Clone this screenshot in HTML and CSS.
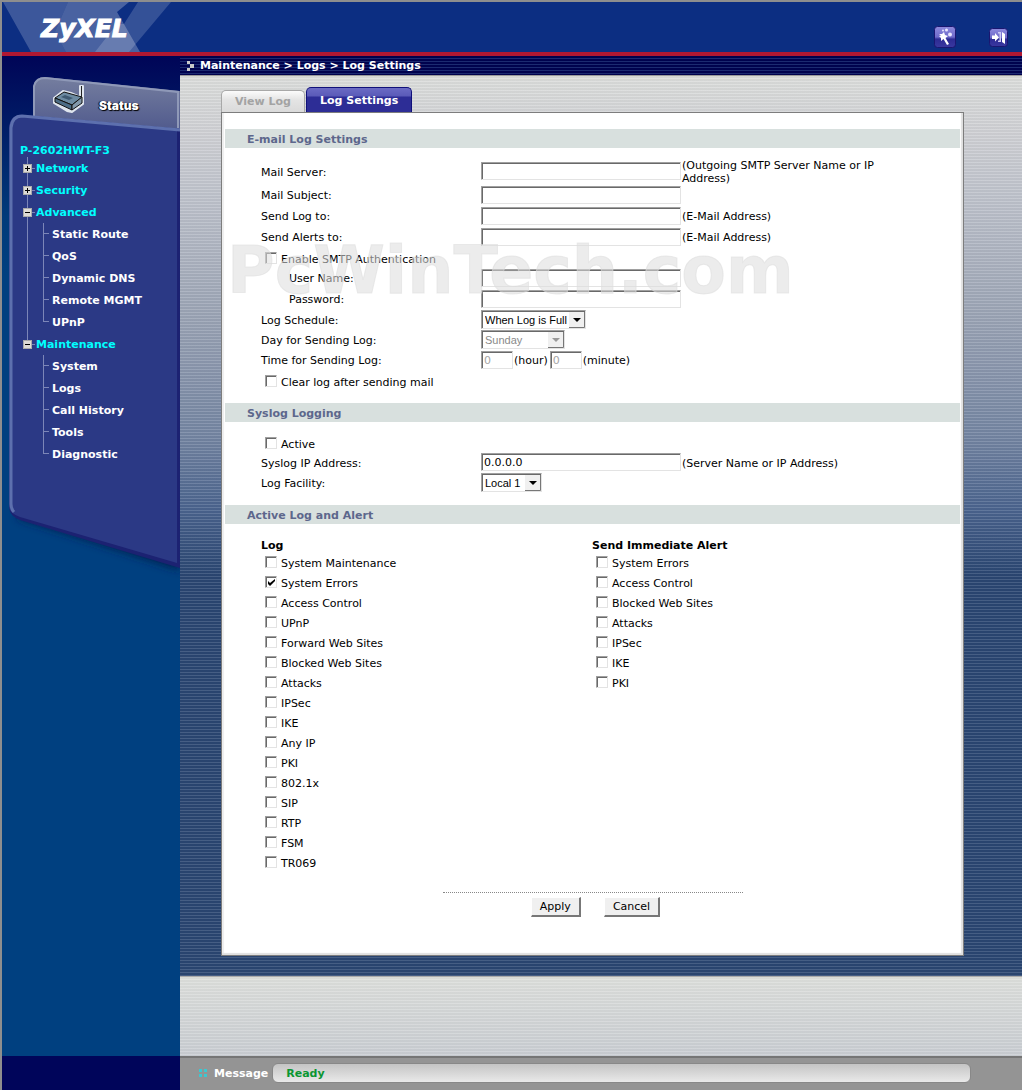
FILE: index.html
```html
<!DOCTYPE html>
<html lang="en">
<head>
<meta charset="utf-8">
<title>Log Settings</title>
<link rel="stylesheet" href="styles.css">
</head>
<body>
<div class="page">
  <header class="banner">
    <svg class="banner-art" width="176" height="50" viewBox="0 0 176 50" aria-hidden="true">
      <g fill="#fff">
        <path d="M1 0H66L53 30L64 50H29Z" fill-opacity=".2"/>
        <path d="M66 0H127L115 10L138 50H64L53 30Z" fill-opacity=".25"/>
        <path d="M136 0H169L127 50H93L115 22L122 22Z" fill-opacity=".17"/>
      </g>
    </svg>
    <h1 class="logo">ZyXEL</h1>
    <div class="banner-tools">
      <button class="tool" type="button" aria-label="Wizard">
        <svg width="22" height="22" viewBox="0 0 22 22">
          <defs><linearGradient id="tool" x1="0" y1="0" x2="0" y2="1"><stop offset="0" stop-color="#8d89dd"/><stop offset=".5" stop-color="#6f6bcb"/><stop offset=".6" stop-color="#2d2b94"/><stop offset="1" stop-color="#3a38a0"/></linearGradient></defs>
          <rect x=".5" y=".5" width="21" height="21" rx="3" fill="url(#tool)" stroke="#1a1670"/>
          <path d="M5 8l3 0 2-2 1 3 3 1-2.500 2 3.500 6-2 1-3.500-6-2.500 2v-3l-2-2 2-.5z" fill="#fff"/>
          <g fill="#e8e6ff"><circle cx="9" cy="4.500" r="1"/><circle cx="12.500" cy="4" r="1.500"/><circle cx="16" cy="8.500" r="2"/></g>
        </svg>
      </button>
      <button class="tool" type="button" aria-label="Logout">
        <svg width="19" height="19" viewBox="0 0 19 19">
          <rect x=".5" y=".5" width="18" height="18" rx="3" fill="url(#tool)" stroke="#1a1670"/>
          <path d="M3 7.500h3V5l4 4.500-4 4V11H3z" fill="#fff"/>
          <path d="M9 4h3v10H9v-1.500h1.500v-7H9z" fill="#c9c7f5"/>
          <path d="M13 4l3 2v10l-3-2z" fill="#fff"/>
        </svg>
      </button>
    </div>
  </header>

  <div class="body">
    <aside class="side">
      <svg class="side-art" width="178" height="530" viewBox="0 0 178 530" aria-hidden="true">
        <defs>
          <linearGradient id="tab" x1="0" y1="0" x2="0" y2="1"><stop offset="0" stop-color="#757e9f"/><stop offset="1" stop-color="#4c568b"/></linearGradient>
          <filter id="shade" x="-10%" y="-10%" width="120%" height="130%"><feGaussianBlur stdDeviation="4"/></filter>
        </defs>
        <path d="M32 70V28Q34 21 43 21L178 35V80Z" fill="url(#tab)"/>
        <path d="M32 62V30Q34 22 43 22L176 36V72" fill="none" stroke="#8f99b8" stroke-width="2"/>
        <path d="M16 462L178 514V500L16 455Z" fill="#00204f" filter="url(#shade)"/>
        <path d="M7 450V72Q8 59 20 59L178 73V512L18 464Q7 460 7 450Z" fill="#1c2272"/>
        <path d="M7 450V72Q8 59 20 59L178 73V75L175 75V507L18 461Q7 457 7 450Z" fill="#2b3985"/>
        <path d="M12 456Q9 453 9 448V72Q10 60 20 60L178 74" fill="none" stroke="#5d70ae" stroke-width="3"/>
        <g transform="translate(51 29)">
          <path d="M1 13L10 6 18 8 27 12V1H30V19L19 27 14 26 1 18Z" fill="#dfe5ee" stroke="#dfe5ee" stroke-width="2" stroke-linejoin="round"/>
          <path d="M2 13L11 7 29 12 19 20Z" fill="#6d8ba2" stroke="#111"/>
          <path d="M2 13V17L19 25V20Z" fill="#4d6d86" stroke="#111"/>
          <path d="M19 20V25L29 18V12Z" fill="#8298aa" stroke="#111"/>
          <path d="M8 12l4-2 8 3-4 2z" fill="#3f5a72"/>
          <path d="M28.500 1V13" stroke="#222"/>
        </g>
      </svg>
      <a class="status" href="#status">Status</a>
      <nav class="menu" aria-label="Main menu">
        <a class="model" href="#model">P-2602HWT-F3</a>
        <ul class="tree">
          <li><div class="branch"><button class="toggle" type="button" aria-label="Expand Network"><svg width="9" height="9"><path d="M2 4.500h5M4.500 2v5" stroke="#000"/></svg></button><a href="#network">Network</a></div></li>
          <li><div class="branch"><button class="toggle" type="button" aria-label="Expand Security"><svg width="9" height="9"><path d="M2 4.500h5M4.500 2v5" stroke="#000"/></svg></button><a href="#security">Security</a></div></li>
          <li><div class="branch"><button class="toggle" type="button" aria-label="Collapse Advanced"><svg width="9" height="9"><path d="M2 4.500h5" stroke="#000"/></svg></button><a href="#advanced">Advanced</a></div>
            <ul class="leaves">
              <li><a href="#static">Static Route</a></li>
              <li><a href="#qos">QoS</a></li>
              <li><a href="#ddns">Dynamic DNS</a></li>
              <li><a href="#remote">Remote MGMT</a></li>
              <li><a href="#upnp">UPnP</a></li>
            </ul>
          </li>
          <li><div class="branch"><button class="toggle" type="button" aria-label="Collapse Maintenance"><svg width="9" height="9"><path d="M2 4.500h5" stroke="#000"/></svg></button><a href="#maintenance">Maintenance</a></div>
            <ul class="leaves">
              <li><a href="#system">System</a></li>
              <li><a href="#logs">Logs</a></li>
              <li><a href="#calls">Call History</a></li>
              <li><a href="#tools">Tools</a></li>
              <li><a href="#diagnostic">Diagnostic</a></li>
            </ul>
          </li>
        </ul>
      </nav>
    </aside>

    <main class="main">
      <div class="crumbs">
        <svg width="7" height="10" viewBox="0 0 7 10" fill="#c8c8c8" aria-hidden="true"><path d="M0 0h3v3H0zM3 3h4v4H3zM0 7h3v3H0z"/></svg>
        <span>Maintenance &gt; Logs &gt; Log Settings</span>
      </div>
      <div class="stage">
        <div class="tabs">
          <a class="tab" href="#view-log">View Log</a>
          <a class="tab tab-on" href="#log-settings">Log Settings</a>
        </div>
        <form class="panel">
          <h2 class="bar">E-mail Log Settings</h2>
          <div class="fields">
            <div class="row row-tall"><label for="server">Mail Server:</label><input class="text" id="server" type="text"><span class="hint">(Outgoing SMTP Server Name or IP Address)</span></div>
            <div class="row"><label for="subject">Mail Subject:</label><input class="text" id="subject" type="text"></div>
            <div class="row"><label for="logto">Send Log to:</label><input class="text" id="logto" type="text"><span class="hint">(E-Mail Address)</span></div>
            <div class="row"><label for="alertto">Send Alerts to:</label><input class="text" id="alertto" type="text"><span class="hint">(E-Mail Address)</span></div>
            <label class="check"><input type="checkbox">Enable SMTP Authentication</label>
            <div class="row"><label class="deep" for="user">User Name:</label><input class="text" id="user" type="text"></div>
            <div class="row"><label class="deep" for="pass">Password:</label><input class="text" id="pass" type="password"></div>
            <div class="row row-low"><label for="schedule">Log Schedule:</label><select class="pick pick-wide" id="schedule"><option>When Log is Full</option></select></div>
            <div class="row row-low"><label for="day">Day for Sending Log:</label><select class="pick pick-mid" id="day" disabled><option>Sunday</option></select></div>
            <div class="row"><label for="hour">Time for Sending Log:</label><input class="text text-short" id="hour" type="text" value="0" disabled><span class="hint">(hour)</span><input class="text text-short" type="text" value="0" aria-label="Minute" disabled><span class="hint">(minute)</span></div>
            <label class="check"><input type="checkbox">Clear log after sending mail</label>
          </div>
          <h2 class="bar">Syslog Logging</h2>
          <div class="fields">
            <label class="check"><input type="checkbox">Active</label>
            <div class="row row-low"><label for="syslog">Syslog IP Address:</label><input class="text" id="syslog" type="text" value="0.0.0.0"><span class="hint">(Server Name or IP Address)</span></div>
            <div class="row row-low"><label for="facility">Log Facility:</label><select class="pick pick-small" id="facility"><option>Local 1</option></select></div>
          </div>
          <h2 class="bar">Active Log and Alert</h2>
          <div class="lists">
            <fieldset class="list">
              <legend>Log</legend>
              <label class="check"><input type="checkbox">System Maintenance</label>
              <label class="check"><input type="checkbox" checked>System Errors</label>
              <label class="check"><input type="checkbox">Access Control</label>
              <label class="check"><input type="checkbox">UPnP</label>
              <label class="check"><input type="checkbox">Forward Web Sites</label>
              <label class="check"><input type="checkbox">Blocked Web Sites</label>
              <label class="check"><input type="checkbox">Attacks</label>
              <label class="check"><input type="checkbox">IPSec</label>
              <label class="check"><input type="checkbox">IKE</label>
              <label class="check"><input type="checkbox">Any IP</label>
              <label class="check"><input type="checkbox">PKI</label>
              <label class="check"><input type="checkbox">802.1x</label>
              <label class="check"><input type="checkbox">SIP</label>
              <label class="check"><input type="checkbox">RTP</label>
              <label class="check"><input type="checkbox">FSM</label>
              <label class="check"><input type="checkbox">TR069</label>
            </fieldset>
            <fieldset class="list">
              <legend>Send Immediate Alert</legend>
              <label class="check"><input type="checkbox">System Errors</label>
              <label class="check"><input type="checkbox">Access Control</label>
              <label class="check"><input type="checkbox">Blocked Web Sites</label>
              <label class="check"><input type="checkbox">Attacks</label>
              <label class="check"><input type="checkbox">IPSec</label>
              <label class="check"><input type="checkbox">IKE</label>
              <label class="check"><input type="checkbox">PKI</label>
            </fieldset>
          </div>
          <hr class="rule">
          <div class="actions">
            <button class="push" type="submit">Apply</button>
            <button class="push" type="reset">Cancel</button>
          </div>
          <div class="watermark" aria-hidden="true">PcWinTech.com</div>
        </form>
      </div>
      <div class="rest"></div>
    </main>
  </div>

  <footer class="foot">
    <div class="foot-side"></div>
    <div class="foot-main">
      <svg width="9" height="8" viewBox="0 0 9 8" fill="#3cc8d2" aria-hidden="true"><path d="M0 0h3v3H0zM5 0h3v3H5zM0 5h3v3H0zM5 5h3v3H5z"/></svg>
      <span class="foot-label">Message</span>
      <output class="foot-text">Ready</output>
    </div>
  </footer>
</div>
</body>
</html>
```
FILE: styles.css
```css
* { box-sizing: border-box; }

body {
  margin: 0;
  font: 11px/13px Verdana, "DejaVu Sans", sans-serif;
  color: #000;
}

a { color: inherit; text-decoration: none; }
ul { list-style: none; margin: 0; padding: 0; }
button { font: inherit; }

.page {
  display: flex;
  flex-direction: column;
  min-height: 100vh;
  border: solid #8e8e8e;
  border-width: 2px 0 0 2px;
}

/* Banner */
.banner {
  position: relative;
  display: flex;
  align-items: center;
  justify-content: space-between;
  height: 54px;
  padding: 0 14px 0 39px;
  background: #0c2e82;
  border-bottom: 4px solid #b01832;
}
.banner-art { position: absolute; left: 0; top: 0; }
.logo {
  position: relative;
  margin: 0;
  padding-top: 4px;
  color: #fff;
  font: italic bold 25px/30px Verdana, "DejaVu Sans", sans-serif;
  -webkit-text-stroke: 1px #fff;
}
.banner-tools {
  display: flex;
  align-items: center;
  gap: 33px;
  padding-top: 20px;
}
.tool { padding: 0; border: 0; background: none; }
.tool svg { display: block; }

/* Sidebar */
.body { flex: 1; display: flex; }
.side {
  position: relative;
  flex: none;
  width: 178px;
  background: linear-gradient(#000557, #003a7a 160px, #004080 220px);
}
.side-art { position: absolute; left: 0; top: 0; }
.status {
  position: relative;
  display: block;
  margin: 42px 0 0 97px;
  color: #fff;
  font: 900 12px/15px Inter, sans-serif;
  text-shadow: 1px 1px 1px #000, -1px 0 1px #000;
}
.menu {
  position: relative;
  padding: 31px 0 0 18px;
  font-weight: bold;
  color: #fff;
}
.model { display: block; color: #0ff; }
.tree > li { background: linear-gradient(#7c86b8, #7c86b8) 7px 0 / 1px 100% no-repeat; }
.tree > li:last-child { background-size: 1px 11px; }
.branch {
  display: flex;
  align-items: center;
  height: 22px;
  padding-left: 3px;
  color: #0ff;
}
.toggle {
  width: 9px;
  height: 9px;
  padding: 0;
  border: 0;
  background: #dedbd6;
  box-shadow: inset 0 0 0 1px #aaa;
}
.toggle svg { display: block; }
.branch::after { content: ""; order: 1; width: 3px; height: 1px; background: #7c86b8; }
.branch a { order: 2; padding-left: 1px; }
.leaves { padding-left: 23px; }
.leaves li {
  height: 22px;
  padding: 5px 0 0 9px;
  background:
    linear-gradient(#7c86b8, #7c86b8) 0 0 / 1px 100% no-repeat,
    linear-gradient(#7c86b8, #7c86b8) 0 10px / 6px 1px no-repeat;
}
.leaves li:last-child { background-size: 1px 11px, 6px 1px; }

/* Main column */
.main { flex: 1; min-width: 0; display: flex; flex-direction: column; }
.crumbs {
  display: flex;
  align-items: center;
  gap: 6px;
  height: 20px;
  padding-left: 7px;
  color: #fff;
  font-weight: bold;
  background: repeating-linear-gradient(#00024e 0 2px, #1c2a70 2px 3px);
  border-bottom: 1px solid #9a9a9a;
}
.stage {
  padding: 11px 58px 20px 41px;
  background:
    repeating-linear-gradient(rgba(0, 0, 0, .03) 0 2px, rgba(255, 255, 255, .13) 2px 3px),
    linear-gradient(#dcdedc, #d0d1d5 55px, #bfc3cc 120px, #9ba4b5 240px, #7485a2 360px, #4c658f 430px, #2a4672 500px);
}
.tabs { display: flex; align-items: flex-end; gap: 1px; }
.tab {
  height: 22px;
  padding: 4px 13px 0;
  font-weight: bold;
  color: #a3a3a3;
  background: linear-gradient(#fbfbfb, #e4e4e4 9px, #dadada);
  border: 1px solid #a8a8a8;
  border-bottom: 0;
  border-radius: 5px 5px 0 0;
}
.tab-on {
  height: 25px;
  padding-top: 6px;
  color: #fff;
  background: linear-gradient(#6b6bc4, #5a5ab8 8px, #2d2d96 9px);
  border-color: #10107a;
}

/* Settings panel */
.panel {
  position: relative;
  padding: 16px 3px 38px;
  background: #fff;
  border: 1px solid #7d7d7d;
  box-shadow: inset -2px -2px 1px #e0e0e0, inset 2px 0 1px #eee;
}
.bar {
  margin: 0;
  padding: 4px 22px 2px;
  font-size: 11px;
  line-height: 13px;
  color: #5d678c;
  background: #d8e0de;
}
.fields { padding: 11px 36px 12px; }
.row { display: flex; align-items: center; height: 21px; }
.row-low { height: 20px; }
.row-tall { height: auto; }
.row > label { flex: none; width: 220px; }
.row > .deep { padding-left: 28px; }
.hint { max-width: 222px; padding: 0 2px 0 1px; }
.text,
.pick,
.check input {
  background: #fff;
  border: 1px solid;
  border-color: #a0a0a0 #e3e3e3 #e3e3e3 #a0a0a0;
  border-radius: 0;
  box-shadow: inset 1px 1px #696969;
}
.text {
  width: 200px;
  height: 18px;
  margin: 0 0 2px;
  padding: 1px 2px 0;
  font: 11px/13px Verdana, "DejaVu Sans", sans-serif;
  color: #000;
}
.text-short { width: 32px; }
.text:disabled { color: #a5a5a5; }
.check {
  display: flex;
  align-items: center;
  gap: 4px;
  height: 20px;
  padding-left: 4px;
}
.fields > .check { padding-top: 2px; }
.check input {
  appearance: none;
  flex: none;
  width: 12px;
  height: 12px;
  margin: 0 0 2px;
}
.check input:checked {
  background: url("data:image/svg+xml,%3Csvg xmlns='http://www.w3.org/2000/svg' width='9' height='9'%3E%3Cpath d='M1 3v3l2 2 5-5V1L3 5z'/%3E%3C/svg%3E") 1px 1px no-repeat;
}
.pick {
  appearance: none;
  height: 19px;
  margin: 0 0 2px;
  padding: 1px 3px 0;
  font: 11px/14px "Liberation Sans", Arial, sans-serif;
  color: #000;
  background: #fff url("data:image/svg+xml,%3Csvg xmlns='http://www.w3.org/2000/svg' width='16' height='16'%3E%3Cpath fill='%23f0f0f0' d='M0 0h16v16H0z'/%3E%3Cpath fill='none' stroke='%23777' d='M0 15.500h15.500V0'/%3E%3Cpath d='M4 6h8L8 10z'/%3E%3C/svg%3E") right 0 top 1px no-repeat;
}
.pick:disabled {
  color: #8a8a8a;
  opacity: 1;
  background-image: url("data:image/svg+xml,%3Csvg xmlns='http://www.w3.org/2000/svg' width='16' height='16'%3E%3Cpath fill='%23f0f0f0' d='M0 0h16v16H0z'/%3E%3Cpath fill='none' stroke='%23777' d='M0 15.500h15.500V0'/%3E%3Cpath fill='%23999' d='M4 6h8L8 10z'/%3E%3C/svg%3E");
}
.pick-wide { width: 105px; }
.pick-mid { width: 84px; }
.pick-small { width: 61px; }

.lists { display: grid; grid-template-columns: 1fr 1fr; padding: 15px 37px 0 36px; }
.list { min-width: 0; margin: 0; padding: 0; border: 0; }
.list legend { margin-bottom: 1px; padding: 0; font-weight: bold; }
.rule {
  width: 300px;
  margin: 19px auto 4px;
  border: 0;
  border-top: 1px dotted #888;
}
.actions {
  display: flex;
  justify-content: center;
  gap: 23px;
  padding-left: 6px;
}
.push {
  height: 20px;
  padding: 0 8px;
  background: #f0f0f0;
  border: solid;
  border-width: 1px 2px 2px 1px;
  border-color: #fff #777 #777 #fff;
}
.watermark {
  position: absolute;
  left: 5px;
  top: 121px;
  font: bold 65px/74px Verdana, "DejaVu Sans", sans-serif;
  color: rgba(221, 221, 221, .56);
  -webkit-text-stroke: 1px rgba(221, 221, 221, .56);
  pointer-events: none;
}
.rest {
  flex: 1;
  min-height: 40px;
  border-top: 1px solid #aaa;
  background:
    repeating-linear-gradient(rgba(0, 0, 0, .02) 0 2px, rgba(255, 255, 255, .15) 2px 3px),
    linear-gradient(#dcdedb, #c9cdd2);
}

/* Message line */
.foot { display: flex; height: 34px; }
.foot-side { flex: none; width: 178px; background: #00055a; }
.foot-main {
  flex: 1;
  display: flex;
  align-items: center;
  padding: 0 51px 2px 19px;
  font-weight: bold;
  background: #949494;
  border-top: 2px solid #757575;
}
.foot-label { padding: 0 4px 0 6px; color: #fff; }
.foot-text {
  flex: 1;
  height: 20px;
  padding: 3px 13px;
  color: #0a9632;
  background: linear-gradient(#c4c4c4, #e9e9e9);
  border: 1px solid #888;
  border-radius: 6px;
}
```
